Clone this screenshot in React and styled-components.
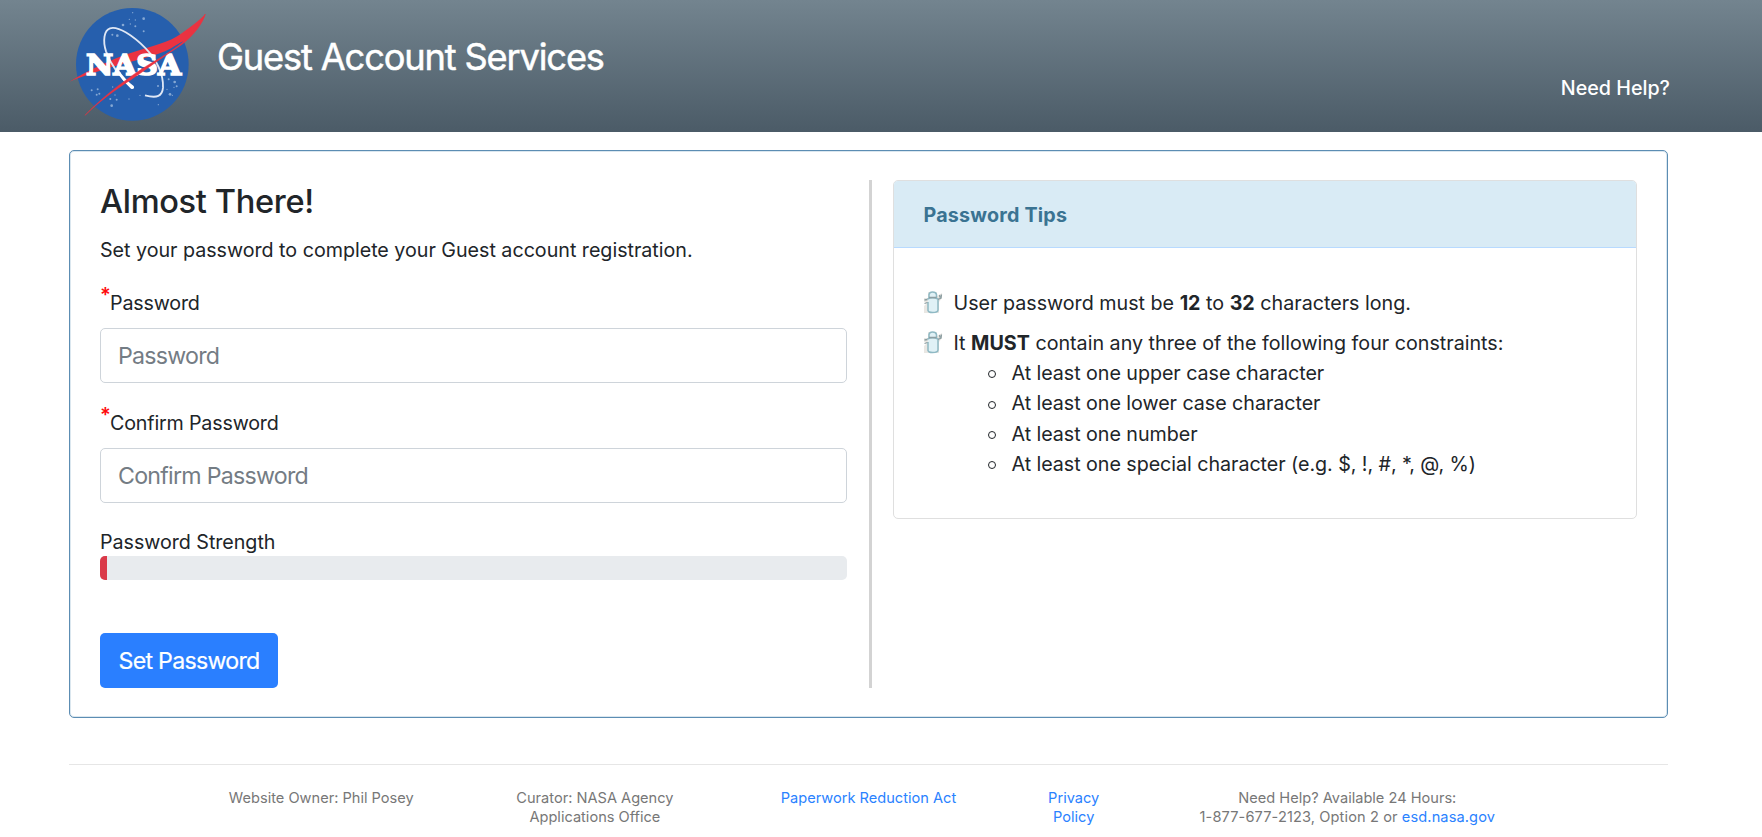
import React from 'react';
import styled, { createGlobalStyle } from 'styled-components';

const GlobalStyle = createGlobalStyle`
  *, *::before, *::after { box-sizing: border-box; }
  body {
    margin: 0;
    background: #fff;
    color: #212529;
    font-family: Inter, "Liberation Sans", sans-serif;
    font-size: 19.7px;
    line-height: 30px;
    overflow: hidden;
  }
`;

const Header = styled.header`
  display: flex;
  align-items: flex-start;
  height: 132px;
  padding: 0 92px 0 60px;
  background: linear-gradient(#73848f, #4b5b67);
`;

const LogoSvg = styled.svg`
  flex: none;
  width: 157px;
  height: 132px;
`;

const SiteTitle = styled.div`
  margin-top: 34px;
  color: #fff;
  font-size: 36.2px;
  line-height: 46px;
  letter-spacing: -1.14px;
  -webkit-text-stroke: 0.5px #fff;
`;

const HelpLink = styled.a`
  margin: 73px 0 0 auto;
  color: #fff;
  font-weight: 500;
`;

const Panel = styled.main`
  display: flex;
  width: 1599px;
  height: 568px;
  margin: 18px 0 0 69px;
  padding: 29px 30px 29px;
  border: 1px solid #5c8db3;
  border-radius: 5px;
  box-shadow: inset 0 0 0 1px #dbe7ef;
`;

const FormColumn = styled.form`
  display: flex;
  flex-direction: column;
  align-items: flex-start;
  width: 747px;
`;

const Divider = styled.div`
  width: 3px;
  margin: 0 21px 0 22px;
  background: #d3d3d3;
`;

const Heading = styled.h1`
  margin: 1px 0 14px;
  font-size: 32.6px;
  font-weight: 500;
  line-height: 40px;
  letter-spacing: -0.34px;
`;

const Intro = styled.p`
  margin: 0 0 23px;
  letter-spacing: -0.02px;
`;

const Field = styled.div`
  display: flex;
  flex-direction: column;
  width: 100%;
  margin-bottom: 24px;
`;

const Label = styled.label`
  margin-bottom: 11px;
  letter-spacing: -0.18px;

  & + input {
    margin-top: -1px;
    margin-bottom: 1px;
  }
`;

const Required = styled.span`
  display: inline-block;
  width: 10px;
  color: #ff0d0d;
  font-size: 20px;
  font-weight: 600;
  line-height: 0;
  vertical-align: 8px;
`;

const TextInput = styled.input`
  width: 100%;
  height: 55px;
  padding: 0 17px;
  border: 1px solid #ced4da;
  border-radius: 5px;
  background: #fff;
  font-family: inherit;
  font-size: 23.2px;
  letter-spacing: -0.75px;
  outline: none;

  &::placeholder {
    color: #747c84;
    opacity: 1;
  }
`;

const StrengthLabel = styled.div`
  height: 29px;
  margin-top: -1px;
  letter-spacing: -0.04px;
`;

const StrengthTrack = styled.div`
  width: 100%;
  height: 24px;
  margin-bottom: 53px;
  overflow: hidden;
  border-radius: 5px;
  background: #e8ebee;
`;

const StrengthFill = styled.div`
  width: ${({ $percent }) => $percent}%;
  height: 100%;
  background: #da3a49;
`;

const SubmitButton = styled.button`
  width: 178px;
  height: 55px;
  padding: 0;
  border: 0;
  border-radius: 5px;
  background: #2a7fff;
  color: #fff;
  font-family: inherit;
  font-size: 23.2px;
  letter-spacing: -0.74px;
  -webkit-text-stroke: 0.2px #fff;
`;

const TipsCard = styled.section`
  width: 745px;
  height: 339px;
  border: 1px solid #dfdfdf;
  border-radius: 5px;
  overflow: hidden;
`;

const TipsHeader = styled.h2`
  height: 67px;
  margin: 0;
  padding: 19px 30px;
  border-bottom: 1px solid #b8daff;
  background: #d9ebf5;
  color: #3a7392;
  font-size: 19.7px;
  font-weight: 700;
  letter-spacing: 0.2px;
`;

const TipList = styled.ul`
  display: flex;
  flex-direction: column;
  gap: 10px;
  margin: 0;
  padding: 40px 29px 0;
  list-style: none;
`;

const Tip = styled.li`
  display: grid;
  grid-template-columns: 31px 1fr;
`;

const TipIconSvg = styled.svg`
  width: 20px;
  height: 24px;
  margin-top: 2px;
`;

const ConstraintList = styled.ul`
  margin: 0;
  padding: 0 0 0 37px;
  list-style: none;
  line-height: 30.4px;
  letter-spacing: -0.05px;
`;

const Constraint = styled.li`
  display: flex;
  align-items: center;
  gap: 17px;

  &::before {
    content: "";
    width: 8px;
    height: 8px;
    margin: 2px -1px 0 -3px;
    border: 1.5px solid #212529;
    border-radius: 50%;
  }
`;

const Footer = styled.footer`
  width: 1599px;
  margin: 46px 0 0 69px;
  border-top: 1px solid #e6e6e6;
`;

const FooterGrid = styled.div`
  display: grid;
  grid-template-columns: 2fr 2fr 2fr 1fr 3fr;
  width: 1368px;
  margin-left: 115.5px;
  padding-top: 24px;
  color: #777;
  font-size: 14.6px;
  line-height: 19px;
  text-align: center;
`;

const FooterLink = styled.a`
  color: #2a82ff;
`;

const PhoneLine = styled.span`
  letter-spacing: 0.11px;
`;

const STARS = [
  [218, 38, 2], [208, 58, 2], [226, 60, 2], [251, 56, 4], [189, 75, 4], [211, 72, 2], [226, 79, 3],
  [251, 94, 3], [157, 104, 3], [172, 107, 4], [95, 271, 3], [113, 268, 3], [110, 284, 3],
  [118, 281, 3], [158, 261, 2], [151, 297, 3], [165, 285, 2], [170, 299, 3], [155, 317, 4],
  [207, 297, 2], [240, 286, 2], [294, 258, 3], [326, 238, 3], [344, 246, 4], [350, 259, 3],
  [342, 262, 2], [330, 283, 4], [337, 286, 2], [295, 314, 2], [321, 268, 2],
];

function NasaLogo() {
  return (
    <LogoSvg viewBox="0 0 471 396" role="img" aria-label="NASA">
      <circle cx="217" cy="193" r="169" fill="#265fad" />
      {STARS.map(([x, y, r]) => (
        <circle key={`${x}-${y}`} cx={x} cy={y} r={r} fill="#b9cfea" opacity="0.65" />
      ))}
      <path
        d="M28 245C90 208 150 180 205 161C275 139 330 126 362 102C390 82 418 62 436 42C427 70 400 105 362 134C385 112 350 134 335 144C290 170 210 184 155 201C105 217 60 231 28 245Z"
        fill="#ea3341"
      />
      <path
        d="M218 264C190 240 154 200 138 154C128 122 132 91 150 85C174 77 219 107 257 145C289 178 311 222 309 263C307 288 292 296 255 286"
        fill="none" stroke="#dfe7f5" strokeWidth="5.5"
      />
      <path d="M176 210C188 228 205 246 221 258C225 264 219 270 213 266C197 252 181 232 170 213Z" fill="#fff" />
      <text
        x="78" y="224" textLength="285" lengthAdjust="spacingAndGlyphs"
        fontFamily="'DejaVu Serif', serif" fontWeight="700" fontSize="84"
        fill="#fff" stroke="#fff" strokeWidth="5"
      >
        NASA
      </text>
      <path
        d="M75 346C119 300 166 262 216 227C270 188 325 163 370 125C400 98 420 70 436 42C427 72 402 105 365 134C318 164 260 207 213 239C160 273 115 307 75 346Z"
        fill="#ea3341" stroke="#ea3341" strokeWidth="1.5"
      />
    </LogoSvg>
  );
}

function TipIcon() {
  return (
    <TipIconSvg viewBox="0 0 20 24" aria-hidden="true">
      <path d="M1 8H5V2H14V6L19 3V8L16 12V23H1V16L4 13L1 12Z" fill="#e9e7e3" />
      <path
        d="M6 8L6 4.5Q6.5 2 9.5 2Q13 2 13.5 4.5V8M4.5 9Q9.5 6.5 15 9V20Q15 22.5 9.5 22.5Q5.5 22.5 5 20.5V12"
        fill="#e0f1f6" stroke="#8fb9c4" strokeWidth="1.5"
      />
      <path d="M6 7.5H13.5M4.5 9.5L1.5 10M4.5 12.5L1.5 13.5M15 9.5L18 8L18.5 4.5M16.5 5L17 7.5" fill="none" stroke="#8b9da1" strokeWidth="1.3" />
    </TipIconSvg>
  );
}

const CONSTRAINTS = [
  'At least one upper case character',
  'At least one lower case character',
  'At least one number',
  'At least one special character (e.g. $, !, #, *, @, %)',
];

function PasswordField({ id, label }) {
  return (
    <Field>
      <Label htmlFor={id}>
        <Required>*</Required>
        {label}
      </Label>
      <TextInput id={id} type="password" placeholder={label} />
    </Field>
  );
}

export default function App() {
  return (
    <>
      <GlobalStyle />
      <Header>
        <NasaLogo />
        <SiteTitle>Guest Account Services</SiteTitle>
        <HelpLink>Need Help?</HelpLink>
      </Header>
      <Panel>
        <FormColumn>
          <Heading>Almost There!</Heading>
          <Intro>Set your password to complete your Guest account registration.</Intro>
          <PasswordField id="password" label="Password" />
          <PasswordField id="confirm" label="Confirm Password" />
          <StrengthLabel>Password Strength</StrengthLabel>
          <StrengthTrack>
            <StrengthFill $percent={1} />
          </StrengthTrack>
          <SubmitButton type="button">Set Password</SubmitButton>
        </FormColumn>
        <Divider />
        <TipsCard>
          <TipsHeader>Password Tips</TipsHeader>
          <TipList>
            <Tip>
              <TipIcon />
              <div>
                User password must be <b>12</b> to <b>32</b> characters long.
              </div>
            </Tip>
            <Tip>
              <TipIcon />
              <div>
                It <b>MUST</b> contain any three of the following four constraints:
                <ConstraintList>
                  {CONSTRAINTS.map((text) => (
                    <Constraint key={text}>{text}</Constraint>
                  ))}
                </ConstraintList>
              </div>
            </Tip>
          </TipList>
        </TipsCard>
      </Panel>
      <Footer>
        <FooterGrid>
          <div>Website Owner: Phil Posey</div>
          <div>
            Curator: NASA Agency
            <br />
            Applications Office
          </div>
          <FooterLink>Paperwork Reduction Act</FooterLink>
          <FooterLink>
            Privacy
            <br />
            Policy
          </FooterLink>
          <div>
            Need Help? Available 24 Hours:
            <br />
            <PhoneLine>
              1-877-677-2123, Option 2 or <FooterLink>esd.nasa.gov</FooterLink>
            </PhoneLine>
          </div>
        </FooterGrid>
      </Footer>
    </>
  );
}
